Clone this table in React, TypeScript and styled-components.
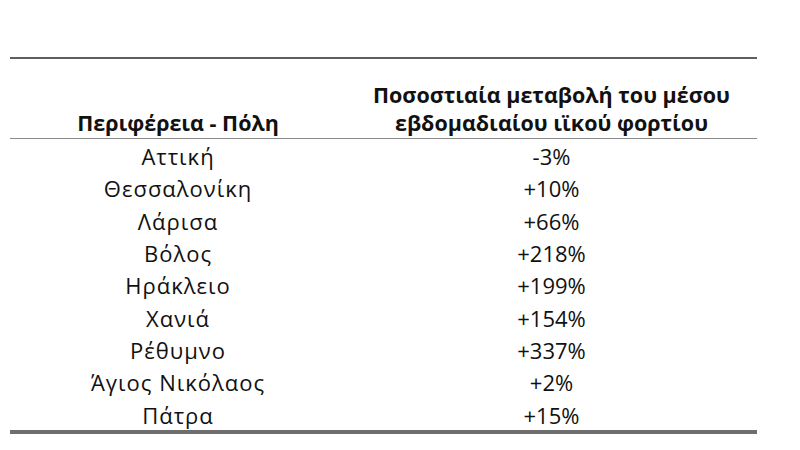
import React from "react";
import styled, { createGlobalStyle } from "styled-components";

const GlobalStyle = createGlobalStyle`
  body {
    margin: 0;
    background: #ffffff;
    font-family: "Open Sans", "Noto Sans", sans-serif;
    color: #111111;
  }
`;

const Page = styled.div`
  width: 800px;
  height: 450px;
  padding: 57px 0 0 10px;
  box-sizing: border-box;
`;

const Table = styled.div`
  width: 747px;
  display: grid;
  grid-template-columns: 336px 1fr;
  border-top: 2px solid #5f5f5f;
  border-bottom: 4px solid #6e6e6e;
`;

const HeadCell = styled.div`
  height: 80px;
  display: flex;
  align-items: flex-end;
  justify-content: center;
  text-align: center;
  font-weight: 700;
  font-size: 21.5px;
  line-height: 28px;
  padding-bottom: 1px;
  box-sizing: border-box;
  border-bottom: 1px solid #8a8a8a;
`;

const Cell = styled.div<{ $numeric?: boolean }>`
  height: 32.3px;
  display: flex;
  align-items: center;
  justify-content: center;
  padding-top: 2px;
  box-sizing: border-box;
  font-size: 22px;
  letter-spacing: ${(p) => (p.$numeric ? "0" : "1px")};
`;

const rows: [string, string][] = [
  ["Αττική", "-3%"],
  ["Θεσσαλονίκη", "+10%"],
  ["Λάρισα", "+66%"],
  ["Βόλος", "+218%"],
  ["Ηράκλειο", "+199%"],
  ["Χανιά", "+154%"],
  ["Ρέθυμνο", "+337%"],
  ["Άγιος Νικόλαος", "+2%"],
  ["Πάτρα", "+15%"],
];

const App = () => {
  return (
    <Page>
      <GlobalStyle />
      <Table>
        <HeadCell>Περιφέρεια - Πόλη</HeadCell>
        <HeadCell>
          Ποσοστιαία μεταβολή του μέσου
          <br />
          εβδομαδιαίου ιϊκού φορτίου
        </HeadCell>
        {rows.map(([city, change]) => (
          <React.Fragment key={city}>
            <Cell>{city}</Cell>
            <Cell $numeric>{change}</Cell>
          </React.Fragment>
        ))}
      </Table>
    </Page>
  );
};

export default App;
